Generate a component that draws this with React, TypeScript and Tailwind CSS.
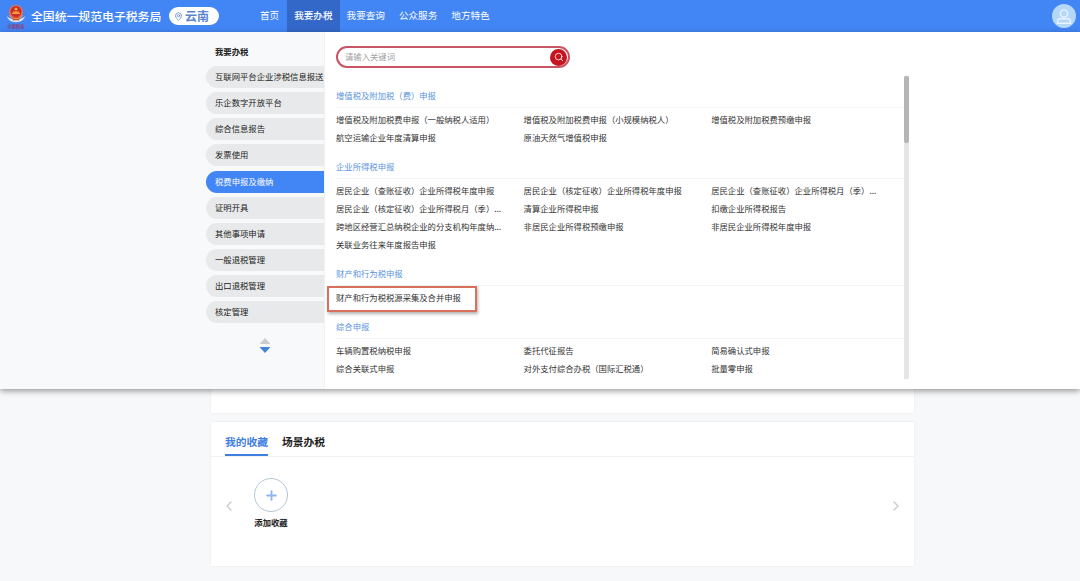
import { useState } from 'react';
import { ChevronLeft, ChevronRight, MapPin, Plus, Search } from 'lucide-react';

interface Section {
  title: string;
  items: string[];
}

const navItems = ['首页', '我要办税', '我要查询', '公众服务', '地方特色'];

const categories = [
  '互联网平台企业涉税信息报送',
  '乐企数字开放平台',
  '综合信息报告',
  '发票使用',
  '税费申报及缴纳',
  '证明开具',
  '其他事项申请',
  '一般退税管理',
  '出口退税管理',
  '核定管理'
];

const sections: Section[] = [
  {
    title: '增值税及附加税（费）申报',
    items: [
      '增值税及附加税费申报（一般纳税人适用）',
      '增值税及附加税费申报（小规模纳税人）',
      '增值税及附加税费预缴申报',
      '航空运输企业年度清算申报',
      '原油天然气增值税申报'
    ]
  },
  {
    title: '企业所得税申报',
    items: [
      '居民企业（查账征收）企业所得税年度申报',
      '居民企业（核定征收）企业所得税年度申报',
      '居民企业（查账征收）企业所得税月（季）...',
      '居民企业（核定征收）企业所得税月（季）...',
      '清算企业所得税申报',
      '扣缴企业所得税报告',
      '跨地区经营汇总纳税企业的分支机构年度纳...',
      '非居民企业所得税预缴申报',
      '非居民企业所得税年度申报',
      '关联业务往来年度报告申报'
    ]
  },
  {
    title: '财产和行为税申报',
    items: ['财产和行为税税源采集及合并申报']
  },
  {
    title: '综合申报',
    items: [
      '车辆购置税纳税申报',
      '委托代征报告',
      '简易确认式申报',
      '综合关联式申报',
      '对外支付综合办税（国际汇税通）',
      '批量零申报'
    ]
  }
];

const highlighted = '财产和行为税税源采集及合并申报';

function Emblem() {
  return (
    <div className="flex w-[20px] flex-col items-center">
      <svg width="20" height="20" viewBox="0 0 20 19">
        <path d="M.8 11.500c1.500 4.500 5 6.200 9.200 6.200s7.700-1.700 9.200-6.200c-2 2.200-5 3.500-9.200 3.500s-7.200-1.300-9.200-3.500z" fill="#dfe5f2" />
        <circle cx="10" cy="7.500" r="7" fill="#e5794a" />
        <circle cx="10" cy="7" r="5.500" fill="#cf2a2c" />
        <path d="M10 2.600l.6 1.300 1.400.1-1 .9.300 1.400-1.300-.7-1.300.7.300-1.400-1-.9 1.400-.1z" fill="#f7c948" />
        <path d="M6 9.500h8v-1.300h-1.300V7H7.300v1.200H6z" fill="#f3a33c" />
        <path d="M5.500 12.200h9l-1.500 3.600H7z" fill="#cf4637" />
        <path d="M3.500 11c1.500 2.500 3.500 3 6.500 3s5-.5 6.500-3" fill="none" stroke="#eda04a" strokeWidth="1" />
      </svg>
      <span className="-mt-px text-[4.200px] leading-[6px] font-bold whitespace-nowrap text-[#8d3f78]">中国税务</span>
    </div>
  );
}

function Header() {
  return (
    <header className="flex h-8 items-center bg-[#4285f4] pr-[4px] pl-[6px] text-white">
      <Emblem />
      <h1 className="ml-[5px] w-[138px] text-[11.850px] font-medium whitespace-nowrap">全国统一规范电子税务局</h1>
      <div className="flex h-[18px] w-[50px] items-center rounded-full bg-white pl-[5px] text-[#5a86d0]">
        <MapPin size={9} strokeWidth={2} />
        <span className="-mt-px ml-[2px] text-[12px] leading-none font-bold">云南</span>
      </div>
      <nav className="ml-[33px] flex h-full">
        {navItems.map(item => (
          <a
            key={item}
            className={`flex h-full items-center px-[7px] pb-[2px] text-[9.600px] whitespace-nowrap first:px-[8px] ${
              item === '我要办税' ? 'bg-[#3468c8] font-medium' : ''
            }`}
          >
            {item}
          </a>
        ))}
      </nav>
      <div className="ml-auto flex size-6 items-center justify-center rounded-full bg-[#b5d7f8]">
        <svg width="16" height="17" viewBox="0 0 16 17" fill="none" stroke="#e9f4ff" strokeWidth="1.400">
          <circle cx="8" cy="5.500" r="3.600" />
          <path d="M1.500 15.300v-1.800c0-1.800 1.500-2.800 3.200-2.800h6.600c1.700 0 3.200 1 3.200 2.800v1.800z" />
        </svg>
      </div>
    </header>
  );
}

interface SidebarProps {
  active: string;
  onSelect: (name: string) => void;
}

function Sidebar({ active, onSelect }: SidebarProps) {
  return (
    <aside className="w-[325px] shrink-0 border-r border-[#eff1f4] bg-[#f7f9fb] pl-[206px]">
      <h2 className="mt-[12px] pl-[9px] text-[8.400px] leading-[14px] font-bold text-[#222]">我要办税</h2>
      <ul className="mt-[8px] flex flex-col gap-[4.150px]">
        {categories.map(name => (
          <li
            key={name}
            onClick={() => onSelect(name)}
            className={`h-[22px] rounded-l-full pl-[9px] text-[8.350px] leading-[20.500px] whitespace-nowrap ${
              name === active ? 'bg-[#4285f4] text-white' : 'bg-[#e8e9ea] text-[#222]'
            }`}
          >
            {name}
          </li>
        ))}
      </ul>
      <div className="mt-[15px] flex justify-center">
        <svg width="12" height="16" viewBox="0 0 12 16">
          <path d="M6 0l5.500 6H.5z" fill="#cbcccd" />
          <path d="M.5 9h11L6 15z" fill="#4583da" />
        </svg>
      </div>
    </aside>
  );
}

function SectionBlock({ title, items }: Section) {
  return (
    <section className="mb-[8.250px]">
      <h3 className="h-[24px] border-b border-[#f3f4f5] text-[8.340px] leading-[22px] text-[#5b93e0]">{title}</h3>
      <ul className="grid grid-cols-[187.600px_187.600px_187.600px] pt-[3.200px]">
        {items.map(item => (
          <li
            key={item}
            className="relative h-[17.850px] text-[8.340px] leading-[17.850px] whitespace-nowrap text-[#333]"
          >
            {item}
            {item === highlighted && (
              <span className="absolute -top-[3px] -left-[9px] h-[26px] w-[150px] border-2 border-[#d9705c] shadow-[1px_2px_3px_rgba(0,0,0,0.3)]" />
            )}
          </li>
        ))}
      </ul>
    </section>
  );
}

function MenuPanel() {
  const [active, setActive] = useState('税费申报及缴纳');
  const [keyword, setKeyword] = useState('');

  return (
    <div className="relative flex h-[357px] bg-white shadow-[0_2px_6px_rgba(0,0,0,0.4)]">
      <Sidebar active={active} onSelect={setActive} />
      <div className="flex-1 pt-[14px] pl-[11px]">
        <div className="flex h-[22px] w-[234px] items-center rounded-full border-2 border-[#c75563] pl-[7px]">
          <input
            value={keyword}
            onChange={e => setKeyword(e.target.value)}
            placeholder="请输入关键词"
            className="min-w-0 flex-1 pb-[2px] text-[8.340px] outline-none placeholder:text-[#a0a0a0]"
          />
          <button className="mr-px flex size-[17px] items-center justify-center rounded-full bg-[#c8141e] text-white">
            <Search size={10} strokeWidth={2} />
          </button>
        </div>
        <div className="mt-[8px] flex h-[303px] w-[573px]">
          <div className="h-full w-[568px] pt-[8px]">
            {sections.map(section => (
              <SectionBlock key={section.title} {...section} />
            ))}
          </div>
          <div className="h-full w-[5px] shrink-0 bg-[#e6e6e6]">
            <div className="h-[67px] rounded-xs bg-[#b5b5b5]" />
          </div>
        </div>
      </div>
    </div>
  );
}

function Favorites() {
  return (
    <div className="mt-[9px] ml-[211px] h-[144px] w-[703px] bg-white shadow-[0_0_2px_rgba(0,0,0,0.08)]">
      <div className="flex h-[35px] gap-[14px] border-b border-[#eef0f2] pl-[14px] text-[10.750px] font-bold">
        <button className="h-[34px] border-b-2 border-[#3f7fe0] pt-[9px] text-[#3f7fe0]">我的收藏</button>
        <button className="h-[34px] border-b-2 border-transparent pt-[9px] text-[#222]">场景办税</button>
      </div>
      <div className="flex items-start px-[11px] pt-[21px]">
        <ChevronLeft size={16} strokeWidth={2} className="mt-[20px] -ml-px text-[#c9cbce]" />
        <div className="ml-[17px] flex w-[34px] flex-col items-center">
          <div className="flex size-[34px] items-center justify-center rounded-full border border-[#b4c6d2] text-[#8db4ef]">
            <Plus size={15} strokeWidth={3} />
          </div>
          <span className="mt-[3px] text-[8.340px] leading-[14px] font-bold whitespace-nowrap text-[#222]">添加收藏</span>
        </div>
        <ChevronRight size={16} strokeWidth={2} className="mt-[20px] -mr-px ml-auto text-[#c9cbce]" />
      </div>
    </div>
  );
}

export default function App() {
  return (
    <div className="h-[581px] w-[1080px] overflow-hidden bg-[#f6f8fa] font-['Noto_Sans_CJK_SC',sans-serif]">
      <Header />
      <MenuPanel />
      <div className="ml-[211px] h-[24px] w-[703px] bg-white shadow-[0_0_2px_rgba(0,0,0,0.08)]" />
      <Favorites />
    </div>
  );
}
